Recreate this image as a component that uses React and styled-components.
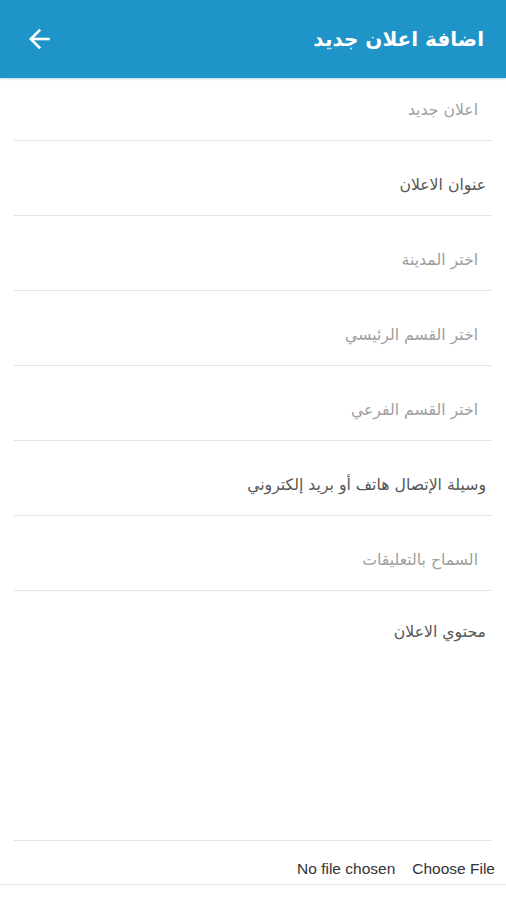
import React from "react";
import styled, { createGlobalStyle } from "styled-components";

const Global = createGlobalStyle`
  html, body { margin: 0; padding: 0; background: #ffffff; }
  body { font-family: "DejaVu Sans", "Noto Sans", sans-serif; }
  * { box-sizing: border-box; }
`;

const Page = styled.div`
  width: 506px;
  min-height: 900px;
  background: #ffffff;
  direction: rtl;
`;

const Header = styled.header`
  height: 78px;
  background: #1e94c8;
  display: flex;
  align-items: center;
  justify-content: space-between;
  padding: 0 22px 0 26px;
  box-shadow: 0 1px 2px rgba(30, 148, 200, 0.35);
`;

const Title = styled.h1`
  margin: 0;
  color: #ffffff;
  font-family: "DejaVu Sans", sans-serif;
  font-size: 20px;
  font-weight: 700;
`;

const BackButton = styled.button`
  border: 0;
  background: transparent;
  padding: 0;
  width: 28px;
  height: 28px;
  display: flex;
  align-items: center;
  justify-content: center;
  cursor: pointer;
`;

const Form = styled.form`
  padding: 0 14px;
  display: flex;
  flex-direction: column;
`;

const Field = styled.div`
  height: ${(p) => (p.$tall ? "238px" : "63px")};
  margin-top: ${(p) => (p.$first ? "0" : "12px")};
  border-bottom: 1px solid #e3e3e3;
  display: flex;
  align-items: ${(p) => (p.$tall ? "flex-start" : "center")};
  padding: ${(p) => (p.$tall ? "19px 6px 0 0" : "0 6px 0 0")};
  padding-right: ${(p) => (p.$placeholder ? "14px" : "6px")};
  font-size: 15.7px;
  color: ${(p) => (p.$placeholder ? "#9e9e9e" : "#555555")};
  font-family: "DejaVu Sans", sans-serif;
`;

const FileRow = styled.div`
  height: 44px;
  border-bottom: 1px solid #e3e3e3;
  display: flex;
  align-items: center;
  gap: 17px;
  padding: 12px 11px 0 0;
  font-family: "Liberation Sans", Arial, sans-serif;
  font-size: 15.5px;
  color: #333333;
`;

const FileText = styled.span`
  direction: ltr;
`;

const fields = [
  { label: "اعلان جديد", placeholder: true, first: true },
  { label: "عنوان الاعلان" },
  { label: "اختر المدينة", placeholder: true },
  { label: "اختر القسم الرئيسي", placeholder: true },
  { label: "اختر القسم الفرعي", placeholder: true },
  { label: "وسيلة الإتصال هاتف أو بريد إلكتروني" },
  { label: "السماح بالتعليقات", placeholder: true },
];

export default function App() {
  return (
    <Page>
      <Global />
      <Header>
        <Title>اضافة اعلان جديد</Title>
        <BackButton aria-label="back">
          <svg width="26" height="26" viewBox="0 0 24 24" fill="none" stroke="#ffffff" strokeWidth="2.4" strokeLinecap="butt">
            <path d="M21 12H3.5" />
            <path d="M12.2 3.3 3.5 12l8.7 8.7" />
          </svg>
        </BackButton>
      </Header>
      <Form>
        {fields.map((f) => (
          <Field key={f.label} $first={f.first} $placeholder={f.placeholder}>
            {f.label}
          </Field>
        ))}
        <Field $tall>محتوي الاعلان</Field>
      </Form>
      <FileRow>
        <FileText>Choose File</FileText>
        <FileText>No file chosen</FileText>
      </FileRow>
    </Page>
  );
}
